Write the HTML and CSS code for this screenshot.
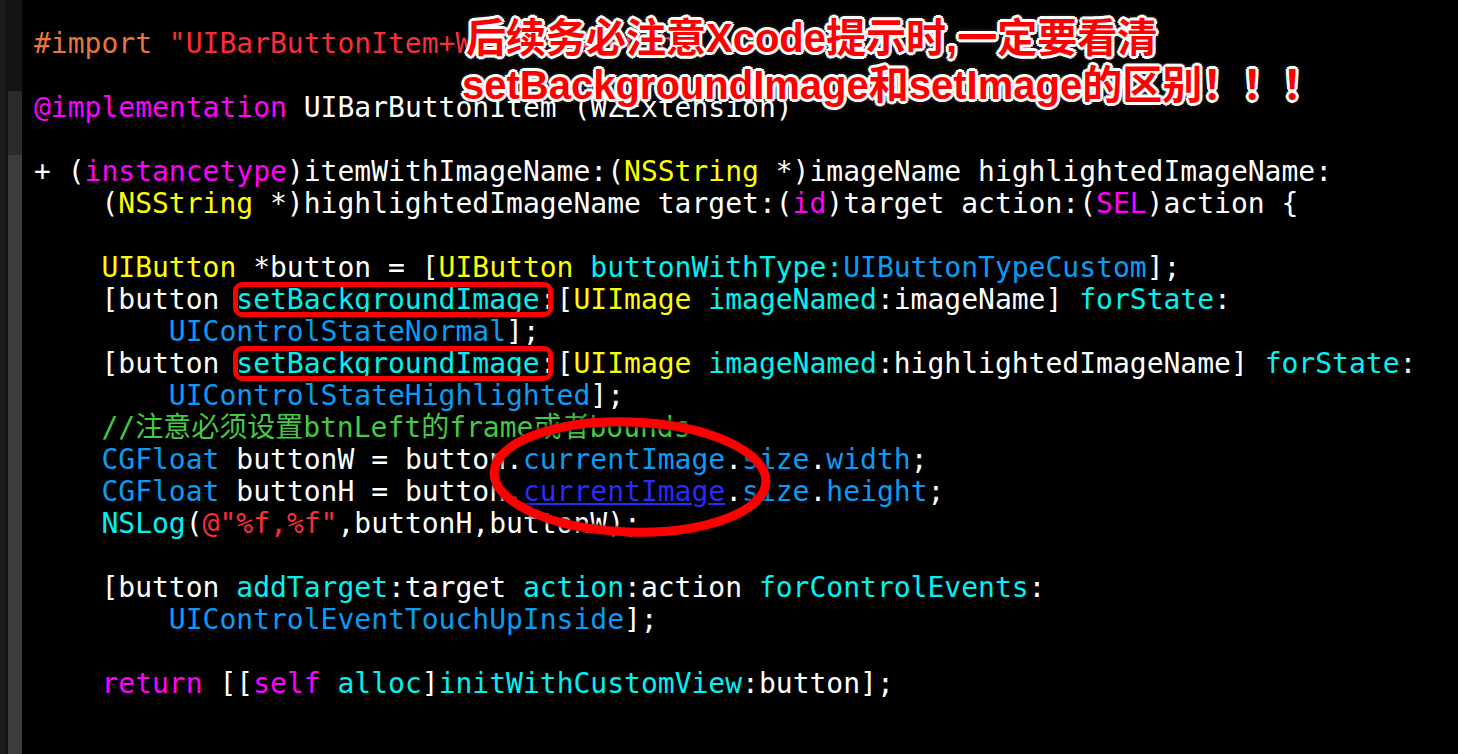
FILE: index.html
```html
<!DOCTYPE html>
<html lang="zh">
<head>
    <meta charset="UTF-8">
    <meta name="viewport" content="width=device-width, initial-scale=1.0">
    <title>UIBarButtonItem+WZExtension.m</title>
    <link rel="stylesheet" href="styles.css">
</head>
<body>
    <div class="gutter">
        <div class="gutter-edge"></div>
        <div class="gutter-marks">
            <div class="band band-top"></div>
            <div class="band band-mid"></div>
            <div class="band band-rest"></div>
        </div>
    </div>

    <div class="code">
        <div class="line"><span class="pre">#import </span><span class="str">"UIBarButtonItem+WZExtension.h"</span></div>
        <div class="line"></div>
        <div class="line"><span class="kw">@implementation</span> UIBarButtonItem (WZExtension)</div>
        <div class="line"></div>
        <div class="line">+ (<span class="kw">instancetype</span>)itemWithImageName:(<span class="cls">NSString</span> *)imageName highlightedImageName:</div>
        <div class="line">    (<span class="cls">NSString</span> *)highlightedImageName target:(<span class="kw">id</span>)target action:(<span class="kw">SEL</span>)action {</div>
        <div class="line"></div>
        <div class="line">    <span class="cls">UIButton</span> *button = [<span class="cls">UIButton</span> <span class="fn">buttonWithType:</span><span class="const">UIButtonTypeCustom</span>];</div>
        <div class="line">    [button <span class="mark"><span class="fn">setBackgroundImage</span>:</span>[<span class="cls">UIImage</span> <span class="fn">imageNamed</span>:imageName] <span class="fn">forState</span>:</div>
        <div class="line">        <span class="const">UIControlStateNormal</span>];</div>
        <div class="line">    [button <span class="mark"><span class="fn">setBackgroundImage</span>:</span>[<span class="cls">UIImage</span> <span class="fn">imageNamed</span>:highlightedImageName] <span class="fn">forState</span>:</div>
        <div class="line">        <span class="const">UIControlStateHighlighted</span>];</div>
        <div class="line">    <span class="comment">//注意必须设置btnLeft的frame或者bounds</span></div>
        <div class="line">    <span class="const">CGFloat</span> buttonW = button.<span class="const">currentImage</span>.<span class="const">size</span>.<span class="const">width</span>;</div>
        <div class="line">    <span class="const">CGFloat</span> buttonH = button.<span class="link">currentImage</span>.<span class="const">size</span>.<span class="const">height</span>;</div>
        <div class="line">    <span class="fn">NSLog</span>(<span class="str">@"%f,%f"</span>,buttonH,buttonW);</div>
        <div class="line"></div>
        <div class="line">    [button <span class="fn">addTarget</span>:target <span class="fn">action</span>:action <span class="fn">forControlEvents</span>:</div>
        <div class="line">        <span class="const">UIControlEventTouchUpInside</span>];</div>
        <div class="line"></div>
        <div class="line">    <span class="kw">return</span> [[<span class="kw">self</span> <span class="fn">alloc</span>]<span class="fn">initWithCustomView</span>:button];</div>
    </div>

    <svg class="circle" width="320" height="160" viewBox="0 0 320 160">
        <ellipse cx="160" cy="80" rx="136" ry="55" transform="rotate(2 160 80)" fill="none" stroke="#ff0000" stroke-width="9"/>
    </svg>

    <div class="note">
        <div class="note-line">后续务必注意Xcode提示时,一定要看清</div>
        <div class="note-line">setBackgroundImage和setImage的区别！！！</div>
    </div>
</body>
</html>
```

FILE: styles.css
```css
body {
    margin: 0;
    height: 754px;
    overflow: hidden;
    display: flex;
    background-color: #000;
    position: relative;
}

/* left gutter */
.gutter {
    display: flex;
    width: 22px;
    flex-shrink: 0;
}
.gutter-edge {
    width: 6px;
    background-color: #1a1a1a;
    border-right: 2px solid #121212;
}
.gutter-marks {
    flex: 1;
    display: flex;
    flex-direction: column;
}
.gutter-marks .band-top {
    height: 91px;
    background-color: #141414;
}
.gutter-marks .band-mid {
    height: 64px;
    background-color: #2b2b2b;
}
.gutter-marks .band-rest {
    flex: 1;
    background-color: #3c3c3c;
}

/* code */
.code {
    padding: 28px 0 0 12px;
    font-family: "DejaVu Sans Mono", "Noto Sans CJK SC", monospace;
    font-size: 28px;
    color: #ffffff;
}
.code .line {
    height: 32px;
    line-height: 32px;
    white-space: pre;
}
.code .pre { color: #e6763c; }
.code .str { color: #fc2d3a; }
.code .kw { color: #ff00ff; }
.code .cls { color: #ffff00; }
.code .fn { color: #00f2f2; }
.code .const { color: #0a9cf5; }
.code .link {
    color: #2a2aff;
    text-decoration: underline;
}
.code .comment { color: #44c944; }

.code .mark {
    display: inline-block;
    position: relative;
    height: 32px;
}
.code .mark::after {
    content: "";
    position: absolute;
    top: -2px;
    bottom: -1px;
    left: -3px;
    right: 4px;
    border: 5px solid #ff0000;
    border-radius: 9px;
    box-shadow: 0 0 2px rgba(0, 0, 0, 0.8);
}

/* hand-drawn highlight */
.circle {
    position: absolute;
    left: 470px;
    top: 397px;
    filter: drop-shadow(0 0 2px #000);
}

/* annotation */
.note {
    position: absolute;
    left: 462px;
    top: 15px;
    font-family: "Liberation Sans", "Noto Sans CJK SC", sans-serif;
    font-weight: bold;
    font-size: 40px;
    line-height: 47px;
    color: #ff0000;
    white-space: nowrap;
    text-shadow:
        3px 0 #fff, -3px 0 #fff, 0 3px #fff, 0 -3px #fff,
        2px 2px #fff, -2px 2px #fff, 2px -2px #fff, -2px -2px #fff,
        0 0 6px rgba(255, 255, 255, 0.6);
}
.note-line:first-child {
    padding-left: 4px;
}
```
